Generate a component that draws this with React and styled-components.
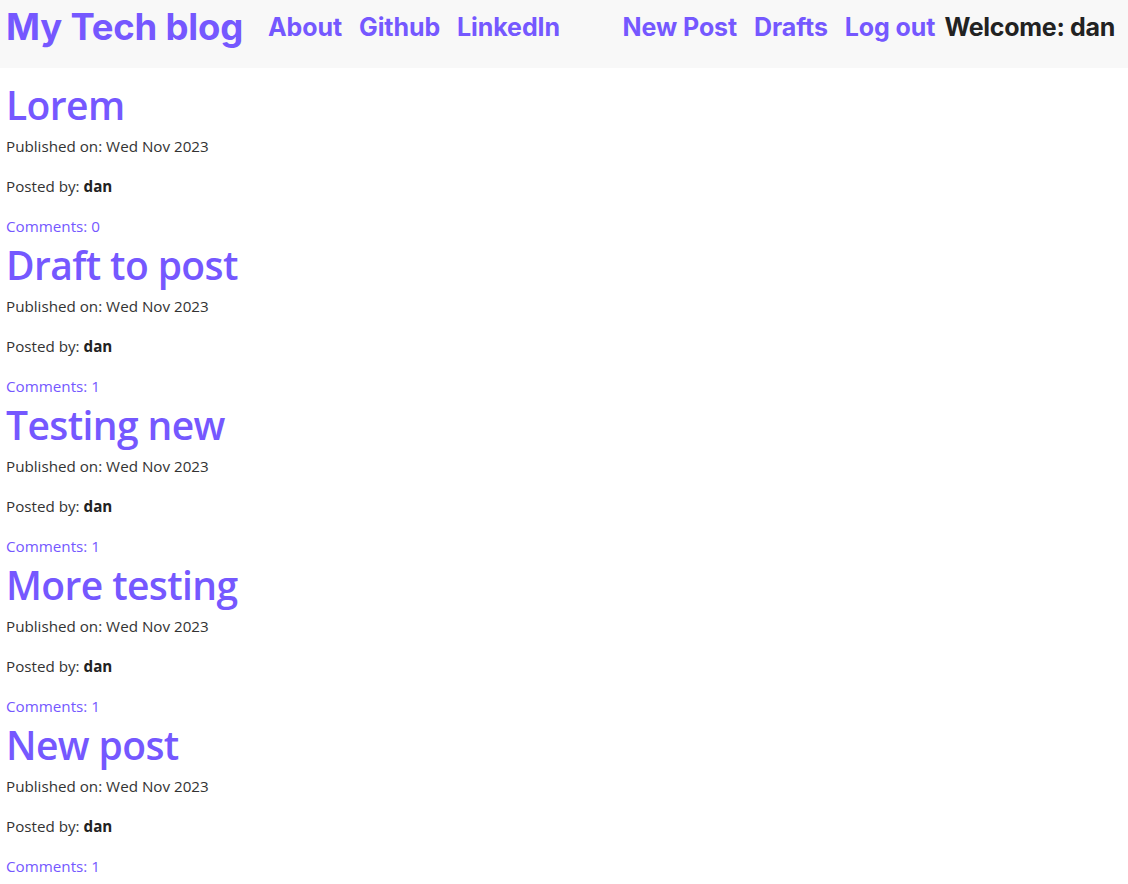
import React from 'react'
import styled, { createGlobalStyle } from 'styled-components'

const GlobalStyle = createGlobalStyle`
    body {
        margin: 0;
        background: #ffffff;
        font-family: "Open Sans", "Noto Sans", sans-serif;
        color: #333333;
    }
`

const PURPLE = '#7558ff'

const Header = styled.header`
    display: flex;
    align-items: center;
    justify-content: space-between;
    height: 54px;
    padding: 0 13px 14px 6px;
    background-color: #f8f8f8;
    font-family: Inter, "Noto Sans", sans-serif;
    font-weight: 700;
`

const LeftGroup = styled.div`
    display: flex;
    align-items: center;
    gap: 25px;
`

const Brand = styled.a`
    font-size: 36.5px;
    color: ${PURPLE};
    text-decoration: none;
    letter-spacing: -0.2px;
`

const NavList = styled.nav`
    display: flex;
    align-items: center;
    gap: 17px;
`

const NavLink = styled.a`
    font-size: 25px;
    color: ${PURPLE};
    text-decoration: none;
    letter-spacing: -0.1px;
`

const RightGroup = styled.div`
    display: flex;
    align-items: center;
    gap: 9px;
`

const Welcome = styled.span`
    font-size: 25px;
    color: #222222;
    letter-spacing: -0.3px;
`

const Main = styled.main`
    padding: 17px 6px 0;
`

const Post = styled.article`
    display: flex;
    flex-direction: column;
`

const PostTitle = styled.a`
    font-size: 39px;
    font-weight: 600;
    line-height: 39px;
    letter-spacing: -0.6px;
    color: ${PURPLE};
    text-decoration: none;
`

const Meta = styled.p`
    margin: 0;
    font-size: 15.2px;
    line-height: 40px;
    color: ${(props) => (props.accent ? PURPLE : '#333333')};

    &:first-of-type {
        margin-top: 2px;
    }

    &:last-child {
        margin-bottom: -1px;
    }

    b {
        color: #222222;
    }
`

const posts = [
    { title: 'Lorem', comments: 0 },
    { title: 'Draft to post', comments: 1 },
    { title: 'Testing new', comments: 1 },
    { title: 'More testing', comments: 1 },
    { title: 'New post', comments: 1 },
]

export default function App() {
    return (
        <>
            <GlobalStyle />
            <Header>
                <LeftGroup>
                    <Brand href="#">My Tech blog</Brand>
                    <NavList>
                        <NavLink href="#">About</NavLink>
                        <NavLink href="#">Github</NavLink>
                        <NavLink href="#">LinkedIn</NavLink>
                    </NavList>
                </LeftGroup>
                <RightGroup>
                    <NavList>
                        <NavLink href="#">New Post</NavLink>
                        <NavLink href="#">Drafts</NavLink>
                        <NavLink href="#">Log out</NavLink>
                    </NavList>
                    <Welcome>Welcome: dan</Welcome>
                </RightGroup>
            </Header>
            <Main>
                {posts.map((post) => (
                    <Post key={post.title}>
                        <PostTitle href="#">{post.title}</PostTitle>
                        <Meta>Published on: Wed Nov 2023</Meta>
                        <Meta>Posted by: <b>dan</b></Meta>
                        <Meta accent>Comments: {post.comments}</Meta>
                    </Post>
                ))}
            </Main>
        </>
    )
}
